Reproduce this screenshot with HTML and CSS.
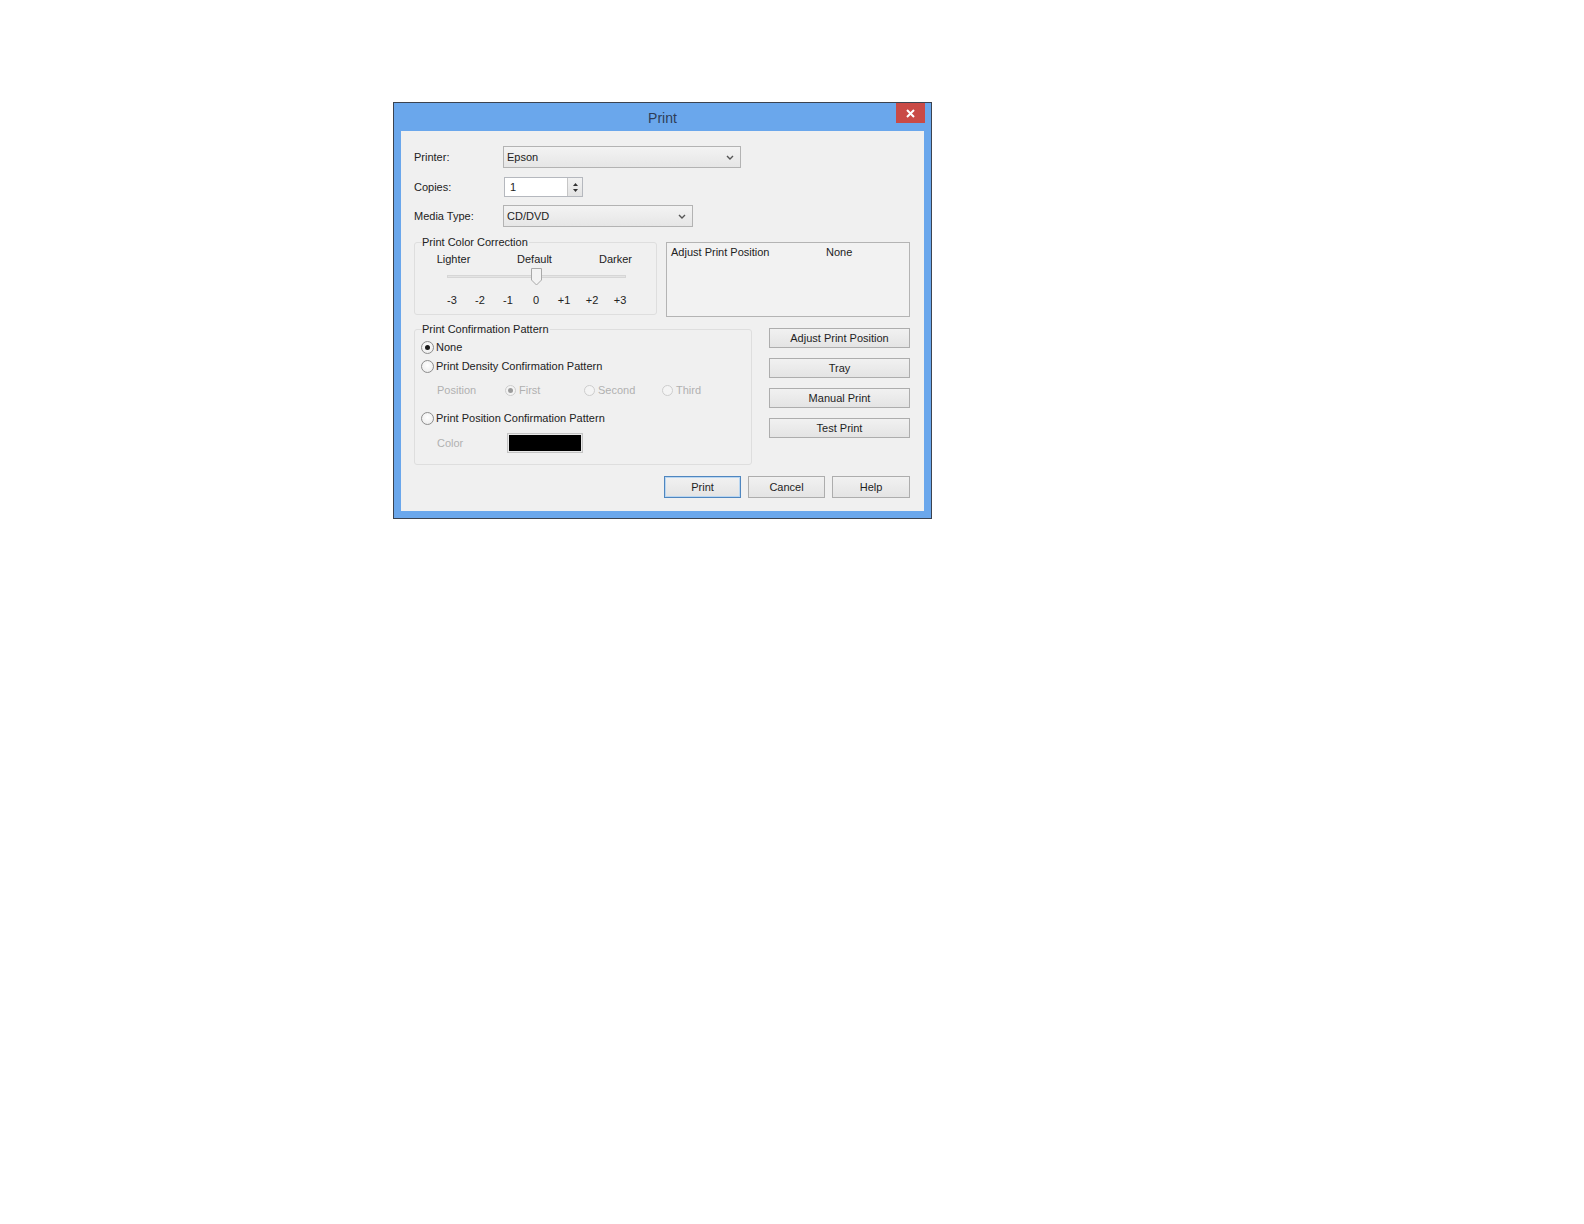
FILE: index.html
```html
<!DOCTYPE html>
<html>
<head>
<meta charset="utf-8">
<title>Print</title>
<link rel="stylesheet" href="styles.css">
</head>
<body>
<div class="page">
  <div class="window">
    <div class="titlebar">
      <span class="title">Print</span>
      <div class="close">
        <svg width="9" height="9" viewBox="0 0 9 9"><path d="M1 1 L8 8 M8 1 L1 8" stroke="#ffffff" stroke-width="2" fill="none"/></svg>
      </div>
    </div>
    <div class="client">
      <div class="field-row row-printer">
        <span class="lbl">Printer:</span>
        <div class="combo combo-printer">
          <span class="combo-text">Epson</span>
          <svg class="chev" width="8" height="5" viewBox="0 0 8 5"><path d="M1 1 L4 4 L7 1" stroke="#555" stroke-width="1.4" fill="none"/></svg>
        </div>
      </div>
      <div class="field-row row-copies">
        <span class="lbl">Copies:</span>
        <div class="spinbox">
          <span class="spin-text">1</span>
          <div class="spin">
            <svg width="5" height="3" viewBox="0 0 5 3"><path d="M0 3 L2.5 0 L5 3 Z" fill="#333"/></svg>
            <svg width="5" height="3" viewBox="0 0 5 3"><path d="M0 0 L2.5 3 L5 0 Z" fill="#333"/></svg>
          </div>
        </div>
      </div>
      <div class="field-row row-media">
        <span class="lbl">Media Type:</span>
        <div class="combo combo-media">
          <span class="combo-text">CD/DVD</span>
          <svg class="chev" width="8" height="5" viewBox="0 0 8 5"><path d="M1 1 L4 4 L7 1" stroke="#555" stroke-width="1.4" fill="none"/></svg>
        </div>
      </div>

      <div class="mid-row">
        <fieldset class="group group-color">
          <legend>Print Color Correction</legend>
          <div class="scale-names">
            <span>Lighter</span><span>Default</span><span>Darker</span>
          </div>
          <svg class="slider" width="241" height="18" viewBox="0 0 241 18">
            <rect x="32.5" y="7.5" width="178" height="2" fill="#e4e4e4" stroke="#d6d6d6" stroke-width="1"/>
            <path d="M116.5 0.5 H126.5 V12 L121.5 17 L116.5 12 Z" fill="#f3f3f3" stroke="#a9a9a9" stroke-width="1"/>
          </svg>
          <div class="ticks">
            <span>-3</span><span>-2</span><span>-1</span><span>0</span><span>+1</span><span>+2</span><span>+3</span>
          </div>
        </fieldset>
        <div class="adjust-box">
          <span class="adj-label">Adjust Print Position</span>
          <span class="adj-value">None</span>
        </div>
      </div>

      <div class="pattern-row">
        <fieldset class="group group-pattern">
          <legend>Print Confirmation Pattern</legend>
          <div class="radio-row row-none">
            <span class="radio checked"></span><span class="radio-text">None</span>
          </div>
          <div class="radio-row row-density">
            <span class="radio"></span><span class="radio-text">Print Density Confirmation Pattern</span>
          </div>
          <div class="position-row">
            <span class="dis-label">Position</span>
            <div class="pos-cell pos-first"><span class="radio small disabled checked"></span><span class="dis-text">First</span></div>
            <div class="pos-cell pos-second"><span class="radio small disabled"></span><span class="dis-text">Second</span></div>
            <div class="pos-cell pos-third"><span class="radio small disabled"></span><span class="dis-text">Third</span></div>
          </div>
          <div class="radio-row row-ppc">
            <span class="radio"></span><span class="radio-text">Print Position Confirmation Pattern</span>
          </div>
          <div class="color-row">
            <span class="dis-label">Color</span>
            <div class="swatch"><div class="swatch-fill"></div></div>
          </div>
        </fieldset>
        <div class="side-buttons">
          <div class="btn">Adjust Print Position</div>
          <div class="btn">Tray</div>
          <div class="btn">Manual Print</div>
          <div class="btn">Test Print</div>
        </div>
      </div>

      <div class="bottom-buttons">
        <div class="btn btn-bottom btn-default">Print</div>
        <div class="btn btn-bottom">Cancel</div>
        <div class="btn btn-bottom btn-help">Help</div>
      </div>
    </div>
  </div>
</div>
</body>
</html>
```

FILE: styles.css
```css
* {
  box-sizing: border-box;
}

html, body {
  margin: 0;
  padding: 0;
  background: #ffffff;
}

body {
  font-family: "Liberation Sans", Arial, sans-serif;
  font-size: 11px;
  line-height: 14px;
  color: #222222;
}

.page {
  padding: 102px 0 0 393px;
}

.window {
  width: 539px;
  height: 417px;
  border: 1px solid #3b4350;
  background: #6aa7ec;
  padding: 0 7px 7px 7px;
  display: flex;
  flex-direction: column;
}

.titlebar {
  position: relative;
  height: 28px;
  margin: 0 -7px;
  display: flex;
  align-items: center;
  justify-content: center;
}

.title {
  font-size: 14px;
  line-height: 16px;
  color: #2e3d57;
  padding-top: 1px;
}

.close {
  position: absolute;
  right: 6px;
  top: 0;
  width: 29px;
  height: 20px;
  background: #c94a46;
  display: flex;
  align-items: center;
  justify-content: center;
}

.client {
  width: 523px;
  height: 380px;
  background: #f0f0f0;
  padding: 15px 14px 0 13px;
}

/* top field rows */
.field-row {
  display: flex;
  align-items: center;
}

.lbl {
  width: 89px;
  flex: none;
}

.row-copies {
  margin-top: 9px;
}

.row-media {
  margin-top: 8px;
}

.combo {
  height: 22px;
  border: 1px solid #b3b3b3;
  background: linear-gradient(#f3f3f3, #e6e6e6);
  display: flex;
  align-items: center;
  justify-content: space-between;
  padding: 0 6px 0 3px;
}

.combo-printer {
  width: 238px;
}

.combo-media {
  width: 190px;
}

.chev {
  display: block;
}

.spinbox {
  margin-left: 1px;
  width: 79px;
  height: 20px;
  border: 1px solid #b5b8be;
  background: #ffffff;
  display: flex;
  align-items: center;
  justify-content: space-between;
}

.spin-text {
  padding-left: 5px;
}

.spin {
  width: 15px;
  height: 18px;
  border-left: 1px solid #c6c6c6;
  background: linear-gradient(#f2f2f2, #e3e3e3);
  display: flex;
  flex-direction: column;
  align-items: center;
  justify-content: center;
  gap: 3px;
}

.spin svg {
  display: block;
}

/* middle row */
.mid-row {
  margin-top: 8px;
  display: grid;
  grid-template-columns: 243px 244px;
  column-gap: 9px;
  align-items: start;
}

.group {
  margin: 0;
  min-width: 0;
  border: 1px solid #dedede;
  border-radius: 3px;
  padding: 0 0 7px 0;
}

.group legend {
  margin-left: 7px;
  padding: 0 1px 0 0;
  line-height: 14px;
}

.scale-names {
  margin-top: 3px;
  margin-left: -2px;
  display: grid;
  grid-template-columns: 81px 81px 81px;
  text-align: center;
}

.slider {
  display: block;
  margin-top: 2px;
}

.ticks {
  margin-top: 7px;
  margin-left: 23px;
  display: grid;
  grid-template-columns: repeat(7, 28px);
  text-align: center;
}

.adjust-box {
  margin-top: 7px;
  height: 75px;
  border: 1px solid #b4b4b4;
  background: #f2f2f2;
  padding: 2px 0 0 4px;
  display: flex;
}

.adj-label {
  width: 155px;
}

/* pattern row */
.pattern-row {
  margin-top: 5px;
  display: grid;
  grid-template-columns: 338px 141px;
  column-gap: 17px;
  align-items: start;
}

.group-pattern {
  padding-bottom: 11px;
}

.radio-row {
  height: 18px;
  display: flex;
  align-items: center;
  margin-left: 6px;
}

.row-none {
  margin-top: 2px;
}

.row-density {
  margin-top: 1px;
}

.row-ppc {
  margin-top: 10px;
}

.radio {
  width: 13px;
  height: 13px;
  flex: none;
  border: 1px solid #8d8d8d;
  border-radius: 50%;
  background: radial-gradient(circle at 50% 40%, #ffffff, #e8e8e8);
  display: flex;
  align-items: center;
  justify-content: center;
}

.radio.checked::after {
  content: "";
  width: 5px;
  height: 5px;
  border-radius: 50%;
  background: #1a1a1a;
}

.radio.small {
  width: 11px;
  height: 11px;
}

.radio.disabled {
  border-color: #cdcdcd;
  background: #f4f4f4;
}

.radio.disabled.checked::after {
  width: 5px;
  height: 5px;
  background: #9c9c9c;
}

.radio-text {
  margin-left: 2px;
}

.position-row {
  margin-top: 6px;
  height: 18px;
  display: grid;
  grid-template-columns: 68px 79px 78px 60px;
  align-items: center;
  padding-left: 22px;
}

.pos-cell {
  display: flex;
  align-items: center;
}

.dis-label,
.dis-text {
  color: #b0b0b0;
}

.dis-text {
  margin-left: 3px;
}

.color-row {
  margin-top: 6px;
  height: 20px;
  display: flex;
  align-items: center;
  padding-left: 22px;
}

.color-row .dis-label {
  width: 70px;
}

.swatch {
  width: 76px;
  height: 20px;
  border: 1px solid #c4c4c4;
  background: #e9e9e9;
  padding: 1px;
}

.swatch-fill {
  width: 100%;
  height: 100%;
  background: #000000;
}

/* buttons */
.side-buttons {
  margin-top: 6px;
  display: flex;
  flex-direction: column;
  gap: 10px;
}

.btn {
  height: 20px;
  border: 1px solid #adadad;
  background: linear-gradient(#f1f1f1, #e4e4e4);
  display: flex;
  align-items: center;
  justify-content: center;
  color: #1e1e1e;
}

.bottom-buttons {
  margin-top: 11px;
  display: flex;
  justify-content: flex-end;
  gap: 7px;
}

.btn-bottom {
  width: 77px;
  height: 22px;
}

.btn-help {
  width: 78px;
}

.btn-default {
  border-color: #4f86bf;
  box-shadow: inset 0 0 0 1px #b9d6f1;
}
```
